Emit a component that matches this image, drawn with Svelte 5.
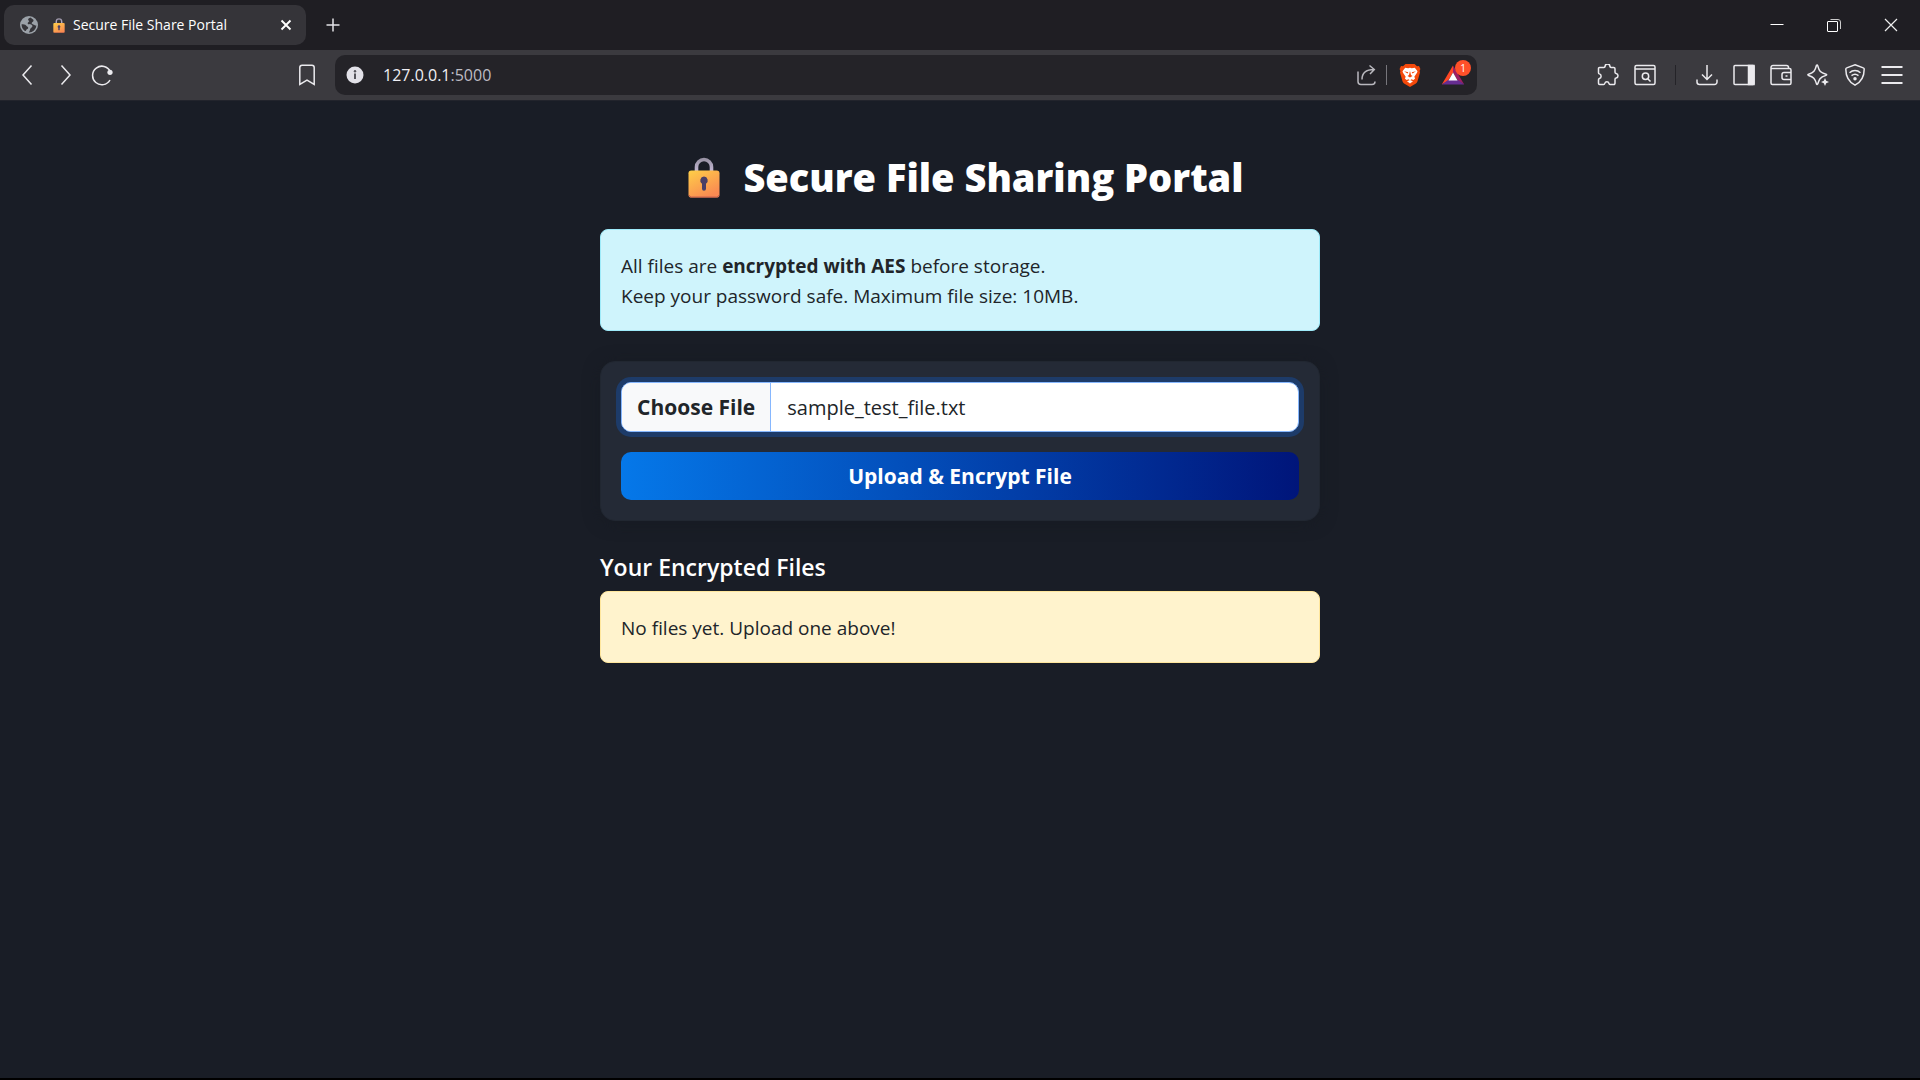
<script>
  import { onMount } from 'svelte';

  let picker;

  onMount(() => {
    const transfer = new DataTransfer();
    transfer.items.add(new File(['sample'], 'sample_test_file.txt', { type: 'text/plain' }));
    picker.files = transfer.files;
  });
</script>

{#snippet lock(id)}
  <svg class="lock" viewBox="0 0 32 41" aria-hidden="true">
    <defs>
      <linearGradient id={id} x1="0" y1="0" x2="0.6" y2="1">
        <stop offset="0" stop-color="#ffcf48" />
        <stop offset="1" stop-color="#f98a52" />
      </linearGradient>
      <linearGradient id="{id}-bow" x1="0" y1="0" x2="0" y2="1">
        <stop offset="0" stop-color="#9a94a6" />
        <stop offset="1" stop-color="#c9bddb" />
      </linearGradient>
    </defs>
    <path d="M8.500 16V10a7.500 7.500 0 0 1 15 0v6" fill="none" stroke="url(#{id}-bow)" stroke-width="3.600" />
    <rect x="0.500" y="13.500" width="31" height="27" rx="2.800" fill="url(#{id})" />
    <path d="M1 38q.6 2 2.500 2h25q1.900 0 2.500-2" fill="none" stroke="#c9604e" />
    <path d="M16 19.500a4 4 0 0 1 2 7.300v5a2 2 0 0 1-4 0v-5a4 4 0 0 1 2-7.300z" fill="#4a3f66" />
  </svg>
{/snippet}

<div class="window">
  <header>
    <div class="tabs">
      <div class="tab">
        <svg class="globe" viewBox="0 0 18 18" aria-hidden="true">
          <circle cx="9" cy="9" r="9" fill="#9ba1a8" />
          <path d="M10.500 1.600C8 2.200 7.500 4 8.800 4.800c1.200.7-.9 1.300-1.100 2.400-.2 1.400 2.600.8 3.900 1.600 1.500 1 .8 2.600-.6 3.200-1.300.6-.6 2.300-2.200 4.500a7.500 7.500 0 0 0 7.600-7c-1.600.5-1.900-.8-3.200-1-1.300-.3-2.200-1.200-1-2.200 1-.8 1.600-.8 1.200-2.500zM1.600 8.300c1.700.3 3.600-.2 4.500 1.300.8 1.400 2.200 1 2.100 2.300-.1 1.200-1.800.9-2 2.200-.1.800-.6 1.100-1.300.8A7.400 7.400 0 0 1 1.600 8.300z" fill="#36353a" />
        </svg>
        {@render lock('tab-lock')}
        <span class="tab-title">Secure File Share Portal</span>
        <button class="close" aria-label="Close tab">
          <svg viewBox="0 0 12 12"><path d="M1.500 1.500l9 9M10.500 1.500l-9 9" stroke="#fff" stroke-width="1.900" /></svg>
        </button>
      </div>
      <button class="new-tab" aria-label="New tab">
        <svg viewBox="0 0 14 14"><path d="M7 .5v13M.5 7h13" stroke="#e4e3e8" stroke-width="1.500" /></svg>
      </button>
      <div class="window-buttons">
        <button aria-label="Minimize"><svg viewBox="0 0 14 14"><path d="M.5 6.500h13" stroke="#fff" /></svg></button>
        <button aria-label="Restore"><svg viewBox="0 0 14 14"><path d="M3.500 1.500h7.500a2.500 2.500 0 0 1 2.500 2.500v7" fill="none" stroke="#ccc" /><rect x=".5" y="3.500" width="10" height="10" rx=".5" fill="none" stroke="#fff" /></svg></button>
        <button aria-label="Close"><svg viewBox="0 0 14 14"><path d="M1 1l12 12M13 1L1 13" stroke="#eee" stroke-width="1.200" /></svg></button>
      </div>
    </div>

    <div class="toolbar">
      <nav class="left" aria-label="Navigation">
        <button aria-label="Back"><svg viewBox="0 0 22 22"><path d="M14.500 1.500L6 11l8.500 9.500" /></svg></button>
        <button aria-label="Forward"><svg viewBox="0 0 22 22"><path d="M7.500 1.500L16 11l-8.500 9.500" /></svg></button>
        <button aria-label="Reload"><svg viewBox="0 0 22 22"><path d="M19.300 7.500A9.300 9.300 0 1 0 19 16" /><circle cx="19" cy="8.300" r="2.600" fill="#ebeaee" stroke="none" /></svg></button>
        <button class="bookmark" aria-label="Bookmark"><svg viewBox="0 0 22 22"><path d="M3.800 20.500v-17a2.300 2.300 0 0 1 2.300-2.300h9.800a2.300 2.300 0 0 1 2.300 2.300v17l-7.200-4.300z" /></svg></button>
      </nav>

      <div class="address">
        <button class="info" aria-label="Site information">
          <svg viewBox="0 0 18 18"><circle cx="9" cy="9" r="8.500" fill="#e2e1e8" stroke="none" /><path d="M9 7.500v5.500" stroke="#55545b" stroke-width="2" /><circle cx="9" cy="5.200" r="1.200" fill="#55545b" stroke="none" /></svg>
        </button>
        <span class="url">127.0.0.1<span>:5000</span></span>
        <button class="share" aria-label="Share"><svg viewBox="0 0 22 22"><path d="M2 7.500v10a3 3 0 0 0 3 3h11a3 3 0 0 0 3-3M6 15.500c0-6 4-10 12-10M13.500 1.500L18.300 5.500l-4.300 4.500" stroke="#b9b8be" /></svg></button>
        <i class="rule"></i>
        <button class="shield" aria-label="Brave Shields">
          <svg viewBox="0 0 22 24">
            <path d="M6.500 1h9L18 3.200l2-.2 1.400 3-.8 2 .4 1.500-2.500 8.800a4 4 0 0 1-1.600 2.200L11 24l-5.900-3.500a4 4 0 0 1-1.600-2.200L1 9.500 1.400 8l-.8-2L2 3l2 .2z" fill="#f4490b" stroke="none" />
            <path d="M6.200 4.800l3 .5L11 4.700l1.800.6 3-.5 2.700 3.400-.5 1.500-2.700 4.100.8 1.600-1.700 1.600-2-.8L11 17.500l-1.400-1.300-2 .8-1.700-1.600.8-1.600L4 9.700l-.5-1.500z" fill="#fff" stroke="none" />
            <path d="M5 8.200l4.300 1-.8 1.200zM17 8.200l-4.300 1 .8 1.200zM11 8l1 4 1.500 1L11 14.500 8.500 13l1.500-1z" fill="#f4490b" stroke="none" />
            <path d="M8 18.300l3-1.300 3 1.300-3 2.200z" fill="#fff" stroke="none" />
          </svg>
        </button>
        <button class="rewards" aria-label="Brave Rewards">
          <svg viewBox="0 0 24 22"><path d="M12 1.500L.8 20.500 7 17l5-8.500z" fill="#ff4724" stroke="none" /><path d="M12 1.500l11.200 19L17 17l-5-8.500z" fill="#9e1f63" stroke="none" /><path d="M.8 20.500h22.400L17 16H7z" fill="#662d91" stroke="none" /><path d="M12 8.500l-4.500 8h9z" fill="#fff" stroke="none" /></svg>
          <span class="badge">1</span>
        </button>
      </div>

      <div class="right">
        <button aria-label="Extensions"><svg viewBox="0 0 22 22"><path d="M2.500 3.500H7c.8 0 1-.4 1.100-1.100a2.400 2.400 0 0 1 4.800 0c.1.700.4 1.100 1.100 1.100h2.700a1.300 1.300 0 0 1 1.300 1.300v3.400c0 .8.400 1.100 1.100 1.200a2.400 2.400 0 0 1 0 4.700c-.7.100-1.100.5-1.100 1.200v4a1.200 1.200 0 0 1-1.200 1.200h-3.600c-.8 0-1-.5-1.200-1.100a2.200 2.200 0 0 0-4.200 0c-.2.700-.5 1.100-1.200 1.100H2.700a1.200 1.200 0 0 1-1.200-1.200v-3.600c0-.7.300-1 .9-1.200a2.400 2.400 0 0 0 0-4.600c-.6-.2-.9-.6-.9-1.200V4.500a1 1 0 0 1 1-1z" /></svg></button>
        <button aria-label="Find on page"><svg viewBox="0 0 22 22"><rect x="1" y="1.500" width="20" height="19" rx="1.500" /><path d="M1 5h20M14 15l2.500 2.500" /><circle cx="11.500" cy="12.300" r="3.200" /></svg></button>
        <i class="rule dark"></i>
        <button aria-label="Downloads"><svg viewBox="0 0 22 22"><path d="M11 1v14M6 10.500l5 5 5-5M1 15.500V18a2.500 2.500 0 0 0 2.500 2.500h15A2.500 2.500 0 0 0 21 18v-2.500" /></svg></button>
        <button aria-label="Sidebar"><svg viewBox="0 0 22 22"><rect x="1" y="1.500" width="20" height="19" rx="1" /><path d="M15.500 1.500H21v19h-5.500z" fill="#ebeaee" /></svg></button>
        <button aria-label="Wallet"><svg viewBox="0 0 22 22"><path d="M1 4.500h18.500A1.500 1.500 0 0 1 21 6v13a1.500 1.500 0 0 1-1.500 1.500h-17A1.500 1.500 0 0 1 1 19V3.500a2 2 0 0 1 2-2h13.500a2 2 0 0 1 2 2v1M21 8.500h-7a2 2 0 0 0-2 2v3a2 2 0 0 0 2 2h7M15.500 12h2" /></svg></button>
        <button aria-label="Leo"><svg viewBox="0 0 22 22"><path d="M9.500 1.300c.5-.6 1-.4 1.200.3 1.500 5.700 2.800 7 8.300 8.600.9.300.9.900 0 1.200-3 .9-4.800 1.700-6 3.300-1 1.400-1.600 3-2.300 5.200-.2.700-.9.700-1.200 0C8 14.500 6.500 13 1.600 11.500c-1-.3-1-1 0-1.300C6.800 8.700 8 7 9.500 1.300z" /><path d="M18 14l1.200 2.800L22 18l-2.800 1.200L18 22l-1.200-2.800L14 18l2.800-1.200z" fill="#ebeaee" stroke="none" /></svg></button>
        <button aria-label="VPN"><svg viewBox="0 0 22 22"><path d="M11 .8l8.300 3.100a1.300 1.300 0 0 1 .9 1.300c0 7.500-2.200 12.300-9.200 16-7-3.700-9.200-8.500-9.200-16 0-.6.300-1.100.9-1.300z" /><path d="M5.500 8.700c3.300-2.800 7.700-2.800 11 0M7.500 11.700c2.200-1.700 4.800-1.700 7 0" /><circle cx="11" cy="14.700" r="1" fill="#ebeaee" /></svg></button>
        <button aria-label="Menu"><svg viewBox="0 0 22 22"><path d="M.5 3h21M.5 11h21M.5 19h21" stroke-width="1.800" /></svg></button>
      </div>
    </div>
  </header>

  <main>
    <h1>{@render lock('title-lock')}<span>Secure File Sharing Portal</span></h1>

    <div class="alert notice">
      All files are <strong>encrypted with AES</strong> before storage.<br />
      Keep your password safe. Maximum file size: 10MB.
    </div>

    <form onsubmit={(event) => event.preventDefault()}>
      <input type="file" aria-label="File to encrypt" bind:this={picker} />
      <button type="submit">Upload &amp; Encrypt File</button>
    </form>

    <h2>Your Encrypted Files</h2>
    <div class="alert empty">No files yet. Upload one above!</div>
  </main>
</div>

<style>
  :global(body) { margin: 0; background: #191d26; }
  .window {
    box-sizing: border-box;
    min-height: 100vh;
    border-bottom: 2px solid #000;
    font-family: "Open Sans", "Noto Sans", sans-serif;
    color: #fff;
  }
  button { border: 0; padding: 0; margin: 0; background: none; font: inherit; color: inherit; display: flex; align-items: center; justify-content: center; }
  svg { display: block; flex: none; }

  .tabs { display: flex; align-items: center; height: 50px; padding-left: 4px; background: #1f1e23; }
  .tab { box-sizing: border-box; display: flex; align-items: center; width: 302px; height: 40px; padding: 0 14px 0 16px; border-radius: 10px; background: #353439; }
  .globe { width: 18px; height: 18px; margin-right: 15px; }
  .tab .lock { width: 12px; height: 15px; margin-right: 8px; }
  .tab-title { flex: 1; font-size: 14px; line-height: 18px; white-space: nowrap; }
  .close svg { width: 12px; height: 12px; }
  .new-tab { width: 54px; height: 40px; }
  .new-tab svg { width: 14px; height: 14px; }
  .window-buttons { display: flex; margin-left: auto; padding-right: 1px; }
  .window-buttons button { width: 57px; height: 48px; }
  .window-buttons svg { width: 14px; height: 14px; }

  .toolbar { display: flex; align-items: center; height: 50px; background: #3b3a3f; border-bottom: 1px solid #22242c; }
  .toolbar svg { width: 22px; height: 22px; fill: none; stroke: #ebeaee; stroke-width: 1.5; }
  .left, .right { box-sizing: border-box; display: flex; align-items: center; padding: 0 10px 0 9px; }
  .left { width: 335px; }
  .right { width: 443px; justify-content: flex-end; }
  .left button, .right button { width: 37px; height: 40px; }
  .left .bookmark { margin-left: auto; }
  .address { flex: 1; box-sizing: border-box; display: flex; align-items: center; height: 40px; padding: 0 12px 0 11px; border-radius: 10px; background: #242328; }
  .address .info svg { width: 18px; height: 18px; }
  .url { flex: 1; padding-left: 19px; font-size: 16px; line-height: 20px; color: #f0eff4; }
  .url span { color: #bdbcc3; }
  .rule { width: 1px; height: 20px; margin: 0 10px; background: #77767c; }
  .rule.dark { margin: 0 12px; background: #242328; }
  .address .rule { margin: 0 10px 0 8px; }
  .shield { width: 26px; margin-right: 18px; }
  .address .shield svg { width: 22px; height: 24px; }
  .rewards { position: relative; width: 24px; }
  .address .rewards svg { width: 24px; height: 22px; }
  .badge { position: absolute; top: -4px; right: -6px; width: 16px; height: 16px; border-radius: 8px; background: #ff5029; font-size: 10px; line-height: 16px; text-align: center; }

  main { box-sizing: border-box; width: 100%; max-width: 720px; margin: 0 auto; padding: 52px 0; }
  h1 { display: flex; align-items: center; justify-content: center; gap: 23px; margin: 0 0 28px; padding-left: 12px; font-size: 38px; font-weight: 800; line-height: 48px; }
  h1 .lock { width: 32px; height: 41px; }
  .alert { padding: 21px 20px 19px; border: 1px solid; border-radius: 8px; font-size: 19px; line-height: 30px; color: #212529; }
  .notice { background: #cff4fc; border-color: #9eeaf9; }
  .empty { background: #fff3cd; border-color: #ffe69c; }
  form { display: flex; flex-direction: column; gap: 20px; margin: 30px 0; padding: 20px; border: 1px solid #212731; border-radius: 15px; background: #242a36; box-shadow: 0 2px 16px #171b23; }
  input { box-sizing: border-box; width: 100%; height: 50px; border: 1px solid #86b7fe; border-radius: 10px; background: #fff; color: #212529; font-family: inherit; font-size: 20px; line-height: 48px; overflow: hidden; box-shadow: 0 0 0 5px #1d3b69; }
  input::file-selector-button { box-sizing: border-box; height: 48px; margin: 0 16px 0 0; padding: 0 15px; border: 0; border-right: 1px solid #86b7fe; background: #f8f9fa; color: #212529; font-family: inherit; font-size: 21px; font-weight: 700; }
  form button { height: 48px; border-radius: 10px; background: linear-gradient(90deg, #0578e9, #00157a); font-size: 21px; font-weight: 700; }
  h2 { margin: 0 0 8px; font-size: 23px; font-weight: 600; line-height: 32px; }
</style>
